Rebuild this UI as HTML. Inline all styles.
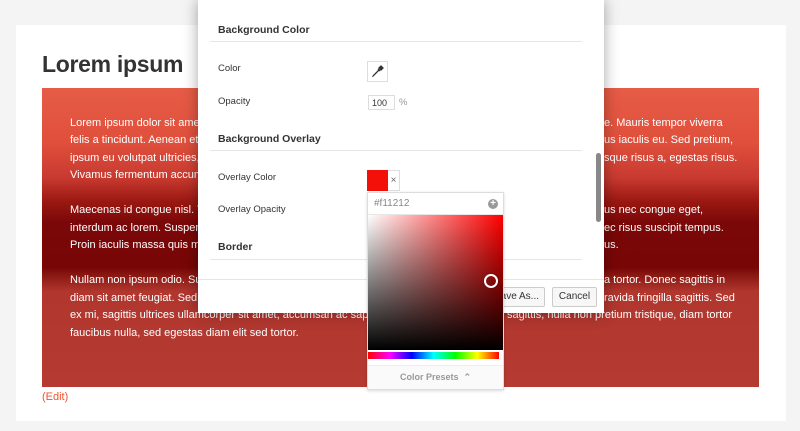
<!DOCTYPE html>
<html><head><style>
*{margin:0;padding:0;box-sizing:border-box}
body{width:800px;height:431px;background:#f4f4f4;position:relative;overflow:hidden;font-family:"Liberation Sans",Arial,sans-serif}
.card{position:absolute;left:16px;top:25px;width:770px;height:396px;background:#fff}
h1{position:absolute;left:42px;top:51px;font-size:23px;font-weight:bold;color:#333;letter-spacing:-0.3px}
.img{position:absolute;left:42px;top:88px;width:717px;height:299px;background:linear-gradient(180deg,#e65c46 0%,#e0503c 18%,#c83a30 30%,#9a1812 38%,#7a0808 45%,#780606 60%,#8c1a14 63%,#b0362e 68%,#b43a32 100%)}
.t{position:absolute;color:#fff;font-size:11px;white-space:nowrap}
.edit{position:absolute;left:42px;top:391px;font-size:11px;color:#f0522e}
.modal{position:absolute;left:198px;top:0;width:406px;height:313px;background:#fff;box-shadow:0 0 14px rgba(0,0,0,.35)}
.m{position:absolute;font-size:9.5px;color:#333}
.h{position:absolute;font-size:10.5px;font-weight:bold;color:#333}
.hr{position:absolute;left:12px;width:372px;height:1px;background:#e6e6e6}
.btn{position:absolute;top:287px;height:20px;border:1px solid #ccc;border-radius:2px;background:#f7f7f7;font-size:10px;color:#333;text-align:center;line-height:18px}
.picker{position:absolute;left:367px;top:192px;width:137px;height:198px;background:#fff;border:1px solid #ddd;box-shadow:0 1px 3px rgba(0,0,0,.15)}
</style></head><body>
<div class="card"></div>
<h1>Lorem ipsum</h1>
<div class="img"></div>
<div class="t" style="left:70px;top:117px">Lorem ipsum dolor sit amet</div>
<div class="t" style="left:70px;top:134px">felis a tincidunt. Aenean et r</div>
<div class="t" style="left:70px;top:152px">ipsum eu volutpat ultricies, l</div>
<div class="t" style="left:70px;top:169px">Vivamus fermentum accums</div>
<div class="t" style="left:70px;top:204px">Maecenas id congue nisl. V</div>
<div class="t" style="left:70px;top:222px">interdum ac lorem. Suspend</div>
<div class="t" style="left:70px;top:239px">Proin iaculis massa quis ma</div>
<div class="t" style="left:70px;top:274px">Nullam non ipsum odio. Sus</div>
<div class="t" style="left:70px;top:292px">diam sit amet feugiat. Sed r</div>
<div class="t" style="left:70px;top:309px">ex mi, sagittis ultrices ullamcorper sit amet, accumsan ac sapien</div>
<div class="t" style="left:70px;top:327px">faucibus nulla, sed egestas diam elit sed tortor.</div>
<div class="t" style="left:604px;top:117px">e. Mauris tempor viverra</div>
<div class="t" style="left:604px;top:134px">us iaculis eu. Sed pretium,</div>
<div class="t" style="left:604px;top:152px">sque risus a, egestas risus.</div>
<div class="t" style="left:604px;top:204px">us nec congue eget,</div>
<div class="t" style="left:604px;top:222px">ec risus suscipit tempus.</div>
<div class="t" style="left:604px;top:239px">us.</div>
<div class="t" style="left:604px;top:274px">a tortor. Donec sagittis in</div>
<div class="t" style="left:604px;top:292px">ravida fringilla sagittis. Sed</div>
<div class="t" style="left:507px;top:309px">sagittis, nulla non pretium tristique, diam tortor</div>
<div class="edit">(Edit)</div>
<div class="modal">
<div class="h" style="left:20px;top:24px">Background Color</div>
<div class="hr" style="top:41px"></div>
<div class="m" style="left:20px;top:63px">Color</div>
<div style="position:absolute;left:169px;top:61px;width:21px;height:21px;border:1px solid #ddd;background:#fff"><svg width="19" height="19" viewBox="0 0 19 19"><path d="M5 14 L11 8 M10 7 L12 9 M11 6 L13 4 L15 6 L13 8 Z" stroke="#333" stroke-width="1.3" fill="#333"/><path d="M5 14 L4.5 15" stroke="#333"/></svg></div>
<div class="m" style="left:20px;top:96px">Opacity</div>
<div style="position:absolute;left:170px;top:95px;width:27px;height:15px;border:1px solid #ddd;font-size:9px;padding:2px 3px;color:#333">100</div>
<div class="m" style="left:201px;top:97px;color:#999">%</div>
<div class="h" style="left:20px;top:133px">Background Overlay</div>
<div class="hr" style="top:150px"></div>
<div class="m" style="left:20px;top:172px">Overlay Color</div>
<div style="position:absolute;left:169px;top:170px;width:21px;height:21px;background:#f31008"></div>
<div style="position:absolute;left:190px;top:170px;width:12px;height:21px;border:1px solid #ddd;border-left:0;font-size:10px;color:#666;text-align:center;line-height:20px">×</div>
<div class="m" style="left:20px;top:204px">Overlay Opacity</div>
<div class="h" style="left:20px;top:241px">Border</div>
<div class="hr" style="top:259px"></div>
<div style="position:absolute;left:0;top:279px;width:406px;height:1px;background:#e6e6e6"></div>
<div class="btn" style="left:290px;width:57px">Save As...</div>
<div class="btn" style="left:354px;width:45px">Cancel</div>
<div style="position:absolute;left:398px;top:153px;width:5px;height:69px;border-radius:3px;background:#888"></div>
</div>
<div class="picker">
<div style="position:absolute;left:6px;top:5px;font-size:10px;color:#888">#f11212</div>
<div style="position:absolute;left:120px;top:6px;width:10px;height:10px;border-radius:50%;background:#999;color:#fff;font-size:10px;line-height:10px;text-align:center;font-weight:bold">+</div>
<div style="position:absolute;left:0;top:21px;width:135px;height:1px;background:#e6e6e6"></div>
<div style="position:absolute;left:0;top:22px;width:135px;height:135px;background:linear-gradient(to bottom,rgba(0,0,0,0),#000),linear-gradient(to right,#fff,#f00)"></div>
<div style="position:absolute;left:116px;top:81px;width:14px;height:14px;border-radius:50%;border:2px solid #fff;box-shadow:0 0 1px #333"></div>
<div style="position:absolute;left:0;top:159px;width:131px;height:7px;background:linear-gradient(to right,#f00,#f0f,#00f,#0ff,#0f0,#ff0,#f00)"></div>
<div style="position:absolute;left:0;top:172px;width:135px;height:1px;background:#eee"></div>
<div style="position:absolute;left:0;top:173px;width:135px;height:23px;background:#fafafa;font-size:9px;font-weight:bold;color:#999;text-align:center;line-height:22px">Color Presets &nbsp;⌃</div>
</div>
</body></html>
